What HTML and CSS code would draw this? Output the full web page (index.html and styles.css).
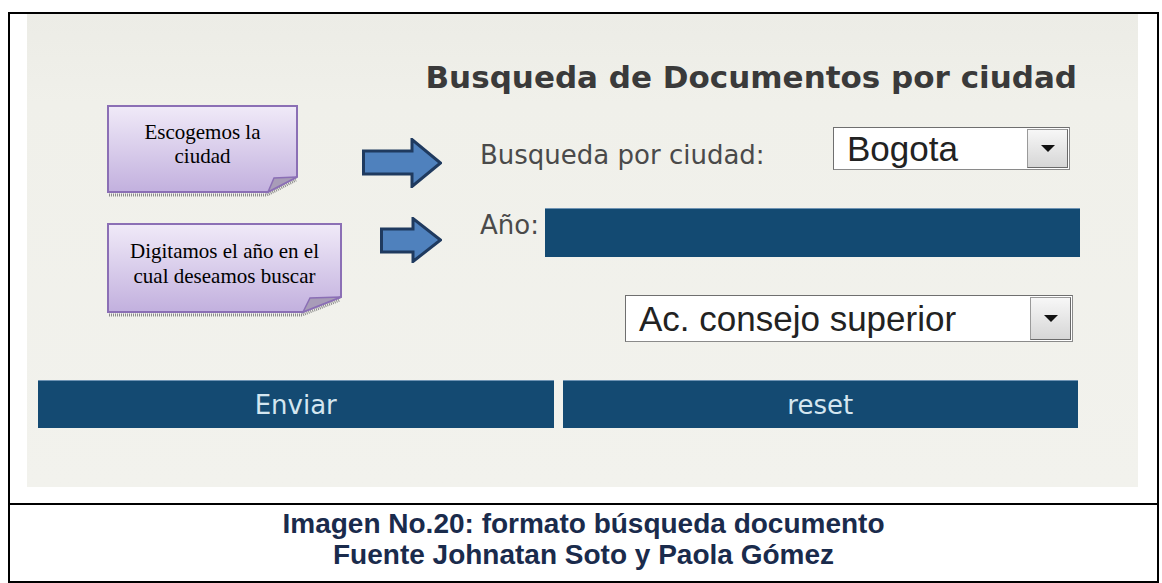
FILE: index.html
```html
<!DOCTYPE html>
<html lang="es">
<head>
    <meta charset="UTF-8">
    <title>Busqueda de Documentos</title>
    <link rel="stylesheet" href="styles.css">
</head>
<body>
    <div class="figure">
        <div class="shot">
            <div class="panel">
                <h2 class="panel-title">Busqueda de Documentos por ciudad</h2>

                <div class="form">
                    <div class="row row-city">
                        <span class="label">Busqueda por ciudad:</span>
                        <div class="select select-city">
                            <span class="select-text">Bogota</span>
                            <span class="select-btn"></span>
                        </div>
                    </div>
                    <div class="row row-year">
                        <span class="label">Año:</span>
                        <div class="year-field"></div>
                    </div>
                    <div class="row row-type">
                        <div class="select select-type">
                            <span class="select-text">Ac. consejo superior</span>
                            <span class="select-btn"></span>
                        </div>
                    </div>
                </div>

                <div class="actions">
                    <button class="btn">Enviar</button>
                    <button class="btn">reset</button>
                </div>

                <!-- notas y flechas encima de la captura -->
                <div class="note note-city">
                    <svg class="note-shape" width="195" height="94" viewBox="0 0 195 94">
                        <defs>
                            <linearGradient id="lila1" x1="0" y1="0" x2="0" y2="1">
                                <stop offset="0" stop-color="#f0eaf8"/>
                                <stop offset="1" stop-color="#c2b0de"/>
                            </linearGradient>
                        </defs>
                        <path d="M2 90 H160 L189 75" fill="none" stroke="#8c8c8c" stroke-width="3" stroke-dasharray="1 1"/>
                        <path d="M1 1 H190 V72 L161 87 H1 Z" fill="url(#lila1)" stroke="#8b6fb5" stroke-width="2"/>
                        <path d="M161 87 L167 73 L190 72 Z" fill="#a89cb8" stroke="#8b6fb5" stroke-width="1.5"/>
                    </svg>
                    <p class="note-text">Escogemos la<br>ciudad</p>
                </div>

                <div class="note note-year">
                    <svg class="note-shape" width="239" height="96" viewBox="0 0 239 96">
                        <defs>
                            <linearGradient id="lila2" x1="0" y1="0" x2="0" y2="1">
                                <stop offset="0" stop-color="#f0eaf8"/>
                                <stop offset="1" stop-color="#c2b0de"/>
                            </linearGradient>
                        </defs>
                        <path d="M2 92 H195 L233 77" fill="none" stroke="#8c8c8c" stroke-width="3" stroke-dasharray="1 1"/>
                        <path d="M1 1 H234 V74 L196 89 H1 Z" fill="url(#lila2)" stroke="#8b6fb5" stroke-width="2"/>
                        <path d="M196 89 L203 75 L234 74 Z" fill="#a89cb8" stroke="#8b6fb5" stroke-width="1.5"/>
                    </svg>
                    <p class="note-text">Digitamos el año en el<br>cual deseamos buscar</p>
                </div>

                <svg class="arrow arrow-city" width="80" height="50" viewBox="0 0 80 50">
                    <path d="M1.5 13 H50 V1.5 L78.5 25 L50 48.5 V36 H1.5 Z" fill="#4f81bd" stroke="#1f3a5f" stroke-width="3" stroke-linejoin="miter"/>
                </svg>
                <svg class="arrow arrow-year" width="62" height="46" viewBox="0 0 62 46">
                    <path d="M1.5 12 H33 V1.5 L60.5 23 L33 44.5 V35 H1.5 Z" fill="#4f81bd" stroke="#1f3a5f" stroke-width="3" stroke-linejoin="miter"/>
                </svg>
            </div>
        </div>
        <div class="caption">
            Imagen No.20: formato búsqueda documento<br>
            Fuente Johnatan Soto y Paola Gómez
        </div>
    </div>
</body>
</html>
```

FILE: styles.css
```css
body {
    margin: 0;
    background-color: #fff;
    font-family: "DejaVu Sans", Verdana, sans-serif;
}
.figure {
    width: 1151px;
    height: 571px;
    margin: 12px 0 0 8px;
    border: 2px solid #000;
    box-sizing: border-box;
    display: flex;
    flex-direction: column;
}
.shot {
    height: 489px;
    padding-left: 17px;
}
.panel {
    position: relative;
    width: 1111px;
    height: 473px;
    box-sizing: border-box;
    padding: 46px 60px 0 11px;
    background: linear-gradient(#ecece6 0, #f0f0ea 90px, #f2f2ed 100%);
}
.panel-title {
    margin: 0 1px 0 0;
    text-align: right;
    font-size: 31px;
    line-height: 34px;
    font-weight: bold;
    color: #3a3a3a;
}
.form {
    margin-left: 442px;
    margin-top: 33px;
    display: flex;
    flex-direction: column;
    gap: 38px;
}
.row {
    display: flex;
    align-items: center;
}
.label {
    font-size: 26px;
    color: #4a4a4a;
}
.row-city {
    justify-content: space-between;
    height: 43px;
}
.row-city .label {
    padding-top: 12px;
}
.row-year {
    align-items: flex-start;
    height: 49px;
}
.row-year .label {
    width: 65px;
    padding-top: 2px;
}
.row-type {
    justify-content: flex-end;
    height: 47px;
}
.select {
    display: flex;
    align-items: center;
    justify-content: space-between;
    background-color: #fff;
    border: 1px solid #8a8a8a;
    border-top-color: #6f6f6f;
    border-left-color: #6f6f6f;
    box-sizing: border-box;
    padding: 0 1px 0 13px;
    font-family: "Liberation Sans", Arial, sans-serif;
    font-size: 35px;
    color: #222;
}
.select-city {
    width: 237px;
    height: 43px;
    margin-right: 8px;
}
.select-type {
    width: 448px;
    height: 47px;
    margin-right: 5px;
}
.select-btn {
    width: 41px;
    height: 39px;
    box-sizing: border-box;
    border: 1px solid #6a6a6a;
    border-top-color: #9a9a9a;
    border-left-color: #9a9a9a;
    background: linear-gradient(#f7f7f7, #d6d6d6);
    display: flex;
    align-items: center;
    justify-content: center;
}
.select-type .select-btn {
    height: 43px;
}
.select-btn::after {
    content: "";
    border-left: 7px solid transparent;
    border-right: 7px solid transparent;
    border-top: 7px solid #111;
}
.year-field {
    flex: 1;
    height: 49px;
    margin-right: -2px;
    background-color: #134a72;
    border-top: 1px solid #6f93b3;
    box-sizing: border-box;
}
.actions {
    margin-top: 38px;
    display: grid;
    grid-template-columns: 1fr 1fr;
    gap: 9px;
}
.btn {
    height: 48px;
    border: none;
    border-top: 1px solid #6f93b3;
    background-color: #144a72;
    color: #d4e6f0;
    font-family: "DejaVu Sans", Verdana, sans-serif;
    font-size: 26px;
    padding: 0;
}
.note {
    position: absolute;
    left: 80px;
}
.note-city {
    top: 91px;
    width: 191px;
    height: 88px;
}
.note-year {
    top: 209px;
    width: 235px;
    height: 90px;
}
.note-shape {
    position: absolute;
    top: 0;
    left: 0;
}
.note-text {
    position: relative;
    margin: 0;
    text-align: center;
    font-family: "Liberation Serif", "Times New Roman", serif;
    font-size: 21px;
    line-height: 24px;
    color: #000;
}
.note-city .note-text {
    padding-top: 15px;
}
.note-year .note-text {
    padding-top: 16px;
    line-height: 25px;
}
.arrow {
    position: absolute;
}
.arrow-city {
    left: 335px;
    top: 124px;
}
.arrow-year {
    left: 353px;
    top: 203px;
}
.caption {
    flex: 1;
    border-top: 2px solid #000;
    padding-top: 3px;
    text-align: center;
    font-family: "Liberation Sans", Arial, sans-serif;
    font-size: 28px;
    line-height: 31px;
    font-weight: bold;
    color: #1a2b4c;
}
```
